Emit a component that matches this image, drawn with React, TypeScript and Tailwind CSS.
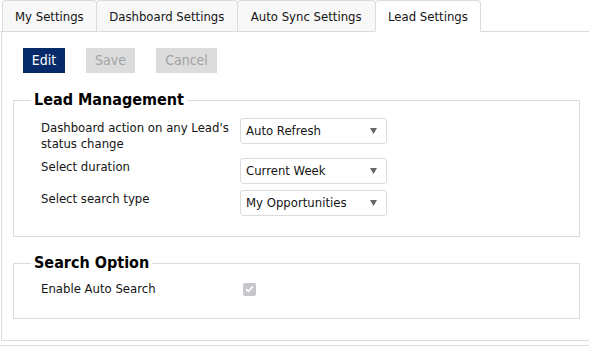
import React from "react";

function Tab({ label, active, pad }: { label: string; active?: boolean; pad: string }) {
  return (
    <div
      className={
        "h-[31px] flex items-center pt-[1px] border border-[#dcdcdc] rounded-t-[4px] -mr-px " +
        pad +
        " " +
        (active ? "bg-white border-b-white -mb-px h-[32px]" : "bg-[#f8f8f8] border-b-0")
      }
    >
      {label}
    </div>
  );
}

function Select({ value }: { value: string }) {
  return (
    <div className="w-[147px] h-[26px] border border-[#dcdcdc] rounded-[3px] flex items-center justify-between pl-[5px] pr-[9px] bg-white">
      <span>{value}</span>
      <svg width="7" height="6" viewBox="0 0 7 6">
        <path d="M0 0 L7 0 L3.5 6 Z" fill="#666" />
      </svg>
    </div>
  );
}

export default function App() {
  return (
    <div className="w-[589px] h-[347px] bg-white text-[13px] text-[#141414] font-['DejaVu_Sans_Condensed','DejaVu_Sans',sans-serif] overflow-hidden">
      <div className="flex pl-[2px] pt-[1px] border-b border-[#dcdcdc] h-[32px] items-end">
        <Tab label="My Settings" pad="px-[12px]" />
        <Tab label="Dashboard Settings" pad="px-[12.5px]" />
        <Tab label="Auto Sync Settings" pad="px-[13px]" />
        <Tab label="Lead Settings" pad="px-[12.5px]" active />
      </div>
      <div className="ml-[1px] border-l border-b border-[#dcdcdc] pt-[16px] pb-[21px]">
        <div className="flex gap-[21px] pl-[21px]">
          <button className="w-[42px] h-[25px] bg-[#062a6a] text-white text-[14px]">Edit</button>
          <button className="w-[49px] h-[25px] bg-[#dcdcdc] text-[#a3a3a3] text-[14px]">Save</button>
          <button className="w-[61px] h-[25px] bg-[#dcdcdc] text-[#a3a3a3] text-[14px]">Cancel</button>
        </div>
        <fieldset className="ml-[11px] mr-[9px] mt-[18px] border border-[#dcdcdc] pl-[17px] pr-[10px] pt-[9px] pb-[20px]">
          <legend className="px-[3px] text-[16px] font-bold leading-[18px] text-black">Lead Management</legend>
          <div className="flex items-start pl-[10px]">
            <div className="w-[199px] leading-[16px] pt-[2px]">Dashboard action on any Lead's status change</div>
            <Select value="Auto Refresh" />
          </div>
          <div className="flex items-start pl-[10px] mt-[6px]">
            <div className="w-[199px] leading-[16px] pt-[1px]">Select duration</div>
            <Select value="Current Week" />
          </div>
          <div className="flex items-start pl-[10px] mt-[6px]">
            <div className="w-[199px] leading-[16px] pt-[1px]">Select search type</div>
            <Select value="My Opportunities" />
          </div>
        </fieldset>
        <fieldset className="ml-[11px] mr-[9px] mt-[17px] border border-[#dcdcdc] pl-[17px] pr-[10px] pt-[9px] pb-[21px]">
          <legend className="px-[3px] text-[16px] font-bold leading-[18px] text-black">Search Option</legend>
          <div className="flex items-center pl-[10px]">
            <div className="w-[202px] leading-[16px]">Enable Auto Search</div>
            <span className="w-[13px] h-[13px] rounded-[2px] bg-[#c6c6cc] flex items-center justify-center">
              <svg width="9" height="8" viewBox="0 0 9 8">
                <path d="M1 4.2 L3.4 6.4 L8 1.4" stroke="white" strokeWidth="1.6" fill="none" />
              </svg>
            </span>
          </div>
        </fieldset>
      </div>
      <div className="mt-[4px] border-t border-[#dcdcdc]" />
    </div>
  );
}
